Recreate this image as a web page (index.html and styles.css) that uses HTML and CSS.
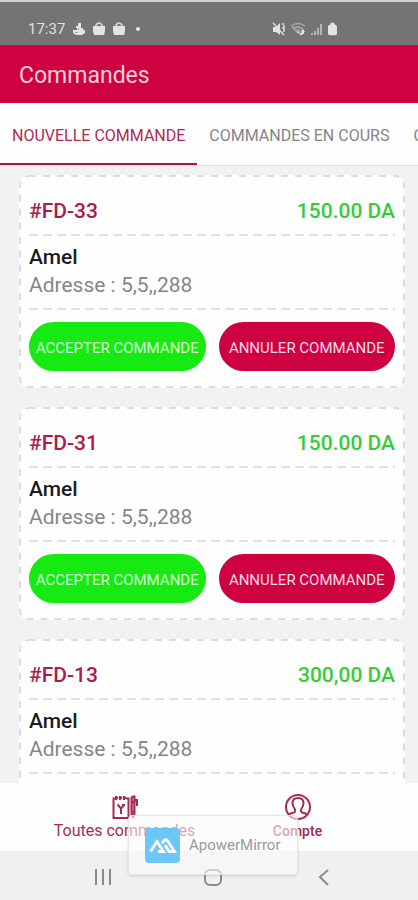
FILE: index.html
```html
<!DOCTYPE html>
<html lang="fr">
<head>
<meta charset="utf-8">
<meta name="viewport" content="width=device-width, initial-scale=1">
<title>Commandes</title>
<link rel="stylesheet" href="styles.css">
</head>
<body>
<div class="status">
  <span class="time">17:37</span>
  <svg class="s-icon" viewBox="0 0 14 14"><path d="M6 1h3v5h2v2h2v3l-3 2H4l-3-2V8h4V6H4V4h2z"/><path class="cut" d="M6 6h1v2H6zM3 10h3v1H3z"/></svg>
  <svg class="s-icon" viewBox="0 0 14 14"><path d="M1 4h12v5l-1 4H2L1 9z"/><path class="line" d="M4 5V3q3-4 6 0v2"/></svg>
  <svg class="s-icon" viewBox="0 0 14 14"><path d="M1 4h12v5l-1 4H2L1 9z"/><path class="line" d="M4 5V3q3-4 6 0v2"/></svg>
  <span class="dot"></span>
  <span class="signals">
    <svg class="s-icon" viewBox="0 0 14 14"><path d="M1 5h3l4-4v12L4 10H1z"/><path class="line" d="M1 1l11 12M10 2h2M10 6h2v2M12 3v7"/></svg>
    <svg class="s-icon wide" viewBox="0 0 16 14"><path class="line dim" d="M1 4q7-5 14 0M3 7q5-4 10 0M5 9q3-2 5 0M2 4l6 7"/><path d="M7 10l2-1 1 3zM11 9l2-2 2 3h-1v2h-2zM10 11h2v2h-2z"/></svg>
    <svg class="s-icon" viewBox="0 0 14 14"><path class="dim-fill" d="M1 11h2v2H1zM4 9h2v4H4zM7 6h2v7H7z"/><path class="dim-fill" d="M10 2h2v11h-2z"/></svg>
    <svg class="s-icon battery" viewBox="0 0 10 14"><path d="M3 0h4v2h1q2 1 2 3v7q0 2-2 2H2q-2 0-2-2V5q0-2 2-3h1z"/></svg>
  </span>
</div>
<header class="appbar"><h1>Commandes</h1></header>
<nav class="tabs">
  <a class="tab active" href="#nouvelles">NOUVELLE COMMANDE</a>
  <a class="tab" href="#encours">COMMANDES EN COURS</a>
  <a class="tab" href="#terminees">COMMANDES TERMINÉES</a>
</nav>
<main class="orders">
  <article class="card">
    <svg class="outline"><rect width="100%" height="100%" rx="10"/></svg>
    <div class="head"><h2>#FD-33</h2><span class="price">150.00 DA</span></div>
    <div class="client"><h3>Amel</h3><p>Adresse : 5,5,,288</p></div>
    <div class="actions"><button class="accept">ACCEPTER COMMANDE</button><button class="cancel">ANNULER COMMANDE</button></div>
  </article>
  <article class="card">
    <svg class="outline"><rect width="100%" height="100%" rx="10"/></svg>
    <div class="head"><h2>#FD-31</h2><span class="price">150.00 DA</span></div>
    <div class="client"><h3>Amel</h3><p>Adresse : 5,5,,288</p></div>
    <div class="actions"><button class="accept">ACCEPTER COMMANDE</button><button class="cancel">ANNULER COMMANDE</button></div>
  </article>
  <article class="card">
    <svg class="outline"><rect width="100%" height="100%" rx="10"/></svg>
    <div class="head"><h2>#FD-13</h2><span class="price">300,00 DA</span></div>
    <div class="client"><h3>Amel</h3><p>Adresse : 5,5,,288</p></div>
    <div class="actions"><button class="accept">ACCEPTER COMMANDE</button><button class="cancel">ANNULER COMMANDE</button></div>
  </article>
</main>
<nav class="bottom">
  <a class="item orders-link" href="#commandes">
    <svg viewBox="0 0 26 26"><path d="M4 4.500H1.500V24h15V4.500H14M4 2v4M8 2v4M12 2v4M4 5l2-2M8 5l2-2M12 5l2-2"/><path d="M5.500 10.500l3.500 4 3.500-4M9 14v6M6.500 12.500h2M10 11h3"/><path class="pen" d="M20 2.500h2.500V20L21 23l-1.500-3V2.500M22.500 6H25v6M19.500 8h3M19.500 18h3"/></svg>
    <span>Toutes commandes</span>
  </a>
  <a class="item" href="#compte">
    <svg viewBox="0 0 26 26"><circle cx="13" cy="13" r="12"/><path d="M4 20.500q2-1.500 5-2 2-1 .5-4Q7.500 12 7.500 9q0-5 5.500-5t5.500 5q0 3-2 5.500-1.500 3 .5 4 3 .5 5 2"/></svg>
    <span>Compte</span>
  </a>
</nav>
<footer class="system">
  <button aria-label="Applications récentes"><svg viewBox="0 0 20 20"><path d="M3 2v16M10 2v16M17 2v16"/></svg></button>
  <button aria-label="Accueil"><svg viewBox="0 0 20 20"><rect x="2" y="3" width="16" height="15" rx="5"/></svg></button>
  <button aria-label="Retour"><svg viewBox="0 0 20 20"><path d="M14 3l-8 7 8 8"/></svg></button>
</footer>
<aside class="mirror">
  <svg viewBox="0 0 35 35"><rect width="35" height="35" rx="4" fill="#6cc6f8"/><path d="M5.500 23.500L12 13.500l6.500 10H13M17 15.500l2.500-3.500h2.500l7.500 11.500H24l-4-6.500" fill="none" stroke="#fff" stroke-width="2.800"/></svg>
  <span>ApowerMirror</span>
</aside>
</body>
</html>
```
FILE: styles.css
```css
* { box-sizing: border-box; margin: 0; }
body {
  display: flex;
  flex-direction: column;
  height: 100vh;
  overflow: hidden;
  background: #f2f2f2;
  font-family: Roboto, sans-serif;
}
a { text-decoration: none; }
button { border: 0; padding: 0; font-family: inherit; white-space: nowrap; }

.status {
  display: flex;
  align-items: center;
  gap: 6px;
  height: 45px;
  flex: none;
  padding: 10px 81px 0 28px;
  border-top: 2px solid #d2d2d2;
  background: #747474;
  color: #e0e0e0;
}
.time { font-size: 15px; line-height: 20px; margin-right: 1px; }
.s-icon { width: 14px; height: 14px; fill: #e4e4e4; }
.s-icon.wide { width: 16px; }
.s-icon.battery { width: 9px; }
.s-icon .line { fill: none; stroke: #dcdcdc; stroke-width: 1.5; }
.s-icon .dim { stroke: #a6a6a6; }
.s-icon .dim-fill { fill: #b4b4b4; }
.s-icon .cut { fill: #a0a0a0; }
.dot { width: 4px; height: 4px; margin-left: 4px; border-radius: 2px; background: #e8e8e8; }
.signals { display: flex; gap: 4px; margin-left: auto; }

.appbar {
  display: flex;
  align-items: center;
  flex: none;
  height: 58px;
  padding: 4px 19px 0;
  background: #ce0240;
  color: #f8cfdb;
}
.appbar h1 { font-size: 23px; font-weight: 400; line-height: 32px; }

.tabs {
  display: flex;
  flex: none;
  height: 63px;
  overflow: hidden;
  background: #fefefe;
  border-bottom: 1px solid #dedede;
}
.tab {
  flex: none;
  height: 62px;
  padding: 1px 12px 0;
  color: #858585;
  font-size: 16px;
  line-height: 64px;
  white-space: nowrap;
}
.tab.active { color: #b02a55; box-shadow: inset 0 -2px #9c1a42; }

.orders {
  display: flex;
  flex-direction: column;
  gap: 19px;
  flex: 1;
  min-height: 0;
  overflow: hidden;
  padding: 9px 13px 0 19px;
}
.card {
  position: relative;
  flex: none;
  padding: 0 10px 17px;
  border-radius: 10px;
  background: #fefefe;
}
.outline { position: absolute; inset: 0; width: 100%; height: 100%; border-radius: 10px; }
.outline rect { fill: none; stroke: #dcdcdc; stroke-width: 4; stroke-dasharray: 7 7; }
.head, .client {
  position: relative;
  background: repeating-linear-gradient(90deg, #e0e0e0 0 9px, transparent 9px 14px) bottom / 100% 2px no-repeat;
}
.head {
  display: flex;
  justify-content: space-between;
  padding: 21px 0 10px;
  font-size: 21px;
  line-height: 30px;
}
.head h2 { font-size: 21px; font-weight: 500; color: #ae1a48; }
.price { font-weight: 500; color: #35cc3a; }
.client { padding: 7px 0 11px; font-size: 21px; line-height: 28px; color: #868686; }
.client h3 { font-size: 21px; font-weight: 500; color: #1c1c1c; }
.actions { position: relative; display: flex; gap: 13px; margin-top: 12px; }
.actions button {
  flex: 1 1 0;
  min-width: 0;
  height: 49px;
  border-radius: 25px;
  font-size: 15px;
  padding-top: 2px;
}
.actions .accept { background: #16ea12; color: #d8fbd7; }
.actions .cancel { background: #ce0240; color: #fbdce6; }

.bottom { display: flex; flex: none; height: 68px; padding: 0 34px 0 38px; background: #fefefe; }
.item {
  display: flex;
  flex-direction: column;
  align-items: center;
  flex: 1;
  padding-top: 11px;
  color: #a62b52;
  font-size: 14px;
  font-weight: 500;
  line-height: 22px;
}
.orders-link { font-size: 16px; font-weight: 400; }
.item svg { width: 26px; height: 26px; fill: none; stroke: #a62b52; stroke-width: 2; }
.item .pen { fill: #d98ba3; }

.system { display: flex; flex: none; justify-content: space-around; height: 49px; padding: 2px 39px 0 48px; background: #f0f0f0; }
.system button { background: none; }
.system svg { display: block; width: 20px; height: 20px; fill: none; stroke: #8a8a8a; stroke-width: 2; }

.mirror {
  position: absolute;
  left: 50%;
  bottom: 25px;
  width: 170px;
  height: 60px;
  margin-left: -81px;
  display: flex;
  align-items: center;
  gap: 9px;
  padding-left: 16px;
  border: 1px solid #e6e6e6;
  border-radius: 4px;
  background: rgba(250, 250, 250, 0.6);
  box-shadow: 0 1px 3px rgba(0, 0, 0, 0.14);
  color: #999;
  font-size: 15px;
}
.mirror svg { width: 35px; height: 35px; }
```
